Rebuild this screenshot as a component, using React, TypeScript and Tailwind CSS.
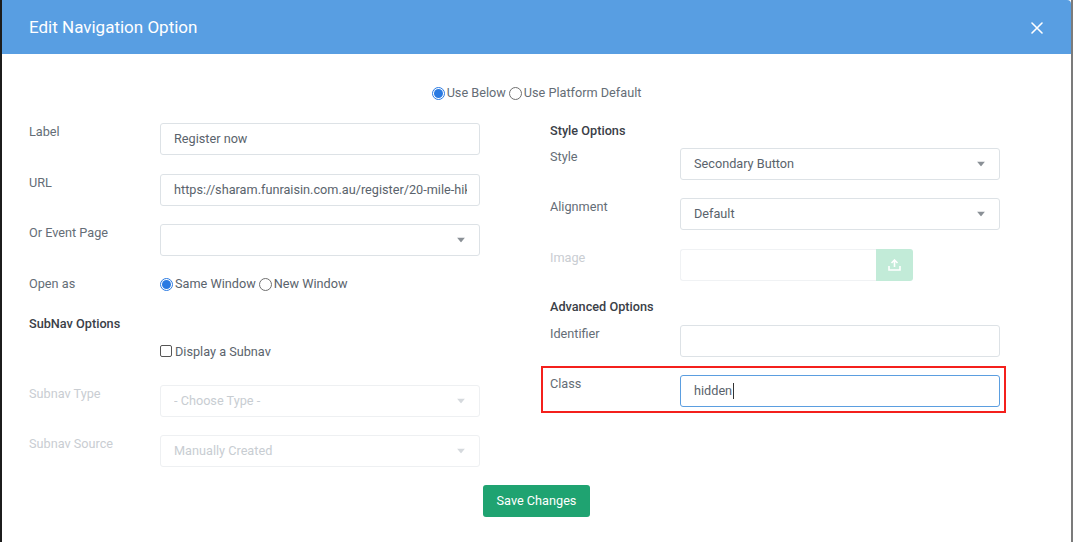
import React from "react";

const font = { fontFamily: "Roboto, 'Noto Sans', sans-serif" };

function Caret({ light }: { light?: boolean }) {
  return (
    <svg width="8" height="5" viewBox="0 0 8 5" className="absolute right-[14px] top-1/2 -translate-y-1/2">
      <path d="M0 0 L8 0 L4 5 Z" fill={light ? "#d5d9dd" : "#8a9096"} />
    </svg>
  );
}

function Radio({ checked }: { checked?: boolean }) {
  return checked ? (
    <span className="inline-flex w-[13px] h-[13px] rounded-full border border-[#2a7ae2] bg-white items-center justify-center mr-[2px]">
      <span className="w-[9px] h-[9px] rounded-full bg-[#2a7ae2]" />
    </span>
  ) : (
    <span className="inline-block w-[13px] h-[13px] rounded-full border border-[#6f6f6f] bg-white mr-[2px]" />
  );
}

function Row({
  label,
  children,
  disabled,
  className = "",
  labelW = "w-[130px]",
}: {
  label: string;
  children: React.ReactNode;
  disabled?: boolean;
  className?: string;
  labelW?: string;
}) {
  return (
    <div className={`flex items-start ${className}`}>
      <div className={`${labelW} leading-[18px] text-[12.7px] ${disabled ? "text-[#c9cdd2]" : "text-[#646d76]"}`}>{label}</div>
      {children}
    </div>
  );
}

function TextBox({ value, disabled, focus, select }: { value?: string; disabled?: boolean; focus?: boolean; select?: boolean }) {
  return (
    <div
      className={`relative w-[320px] h-[32px] rounded-[3px] border bg-white flex items-center pl-[13px] pr-[12px] whitespace-nowrap text-[12.7px] ${
        focus ? "border-[#5b9ee0]" : disabled ? "border-[#eef0f2]" : "border-[#dde2e6]"
      } ${disabled ? "text-[#c8cdd2]" : "text-[#5a636c]"}`}
    >
      <div className="flex-1 overflow-hidden flex items-center">
        <span>{value}</span>
        {focus && <span className="inline-block w-px h-[16px] bg-[#333] ml-px" />}
      </div>
      {select && <Caret light={disabled} />}
    </div>
  );
}

export default function App() {
  return (
    <div className="w-[1073px] h-[542px] flex overflow-hidden bg-white" style={font}>
      <div className="w-[2px] h-full bg-[#1c1c1c]" />
      <div className="flex-1 flex flex-col bg-white">
        <div className="h-[54px] bg-[#589ee2] rounded-tr-[4px] flex items-center justify-between pl-[27px] pr-[28px] pt-[1px]">
          <div className="text-white text-[17px] font-normal">Edit Navigation Option</div>
          <svg width="12" height="12" viewBox="0 0 12 12">
            <path d="M1 1 L11 11 M11 1 L1 11" stroke="white" strokeWidth="1.6" strokeLinecap="round" />
          </svg>
        </div>
        <div className="flex flex-col pt-[30px]">
          <div className="flex justify-center items-center h-[18px] text-[12.7px] text-[#646d76]">
            <Radio checked />
            <span className="mr-[3px]">Use Below</span>
            <Radio />
            <span>Use Platform Default</span>
          </div>
          <div className="flex pl-[27px] pt-[20px]">
            <div className="w-[451px] flex flex-col pt-[1px]">
              <Row label="Label" labelW="w-[131px]" className="mb-[19px]">
                <TextBox value="Register now" />
              </Row>
              <Row label="URL" labelW="w-[131px]" className="mb-[18px]">
                <TextBox value="https://sharam.funraisin.com.au/register/20-mile-hike" />
              </Row>
              <Row label="Or Event Page" labelW="w-[131px]" className="mb-[19px]">
                <TextBox select />
              </Row>
              <Row label="Open as" labelW="w-[131px]" className="mb-[22px]">
                <div className="flex items-center h-[18px] text-[12.7px] text-[#5a636c]">
                  <Radio checked />
                  <span className="mr-[3px]">Same Window</span>
                  <Radio />
                  <span>New Window</span>
                </div>
              </Row>
              <div className="h-[18px] leading-[18px] text-[12.7px] font-medium text-[#3a4047] mb-[10px]">SubNav Options</div>
              <div className="flex items-center h-[18px] pl-[131px] text-[12.7px] text-[#5a636c] mb-[24px]">
                <span className="inline-block w-[12px] h-[12px] rounded-[2px] border border-[#555] bg-white mr-[3px] -mt-[2px]" />
                <span>Display a Subnav</span>
              </div>
              <Row label="Subnav Type" labelW="w-[131px]" disabled className="mb-[18px]">
                <TextBox value="- Choose Type -" disabled select />
              </Row>
              <Row label="Subnav Source" labelW="w-[131px]" disabled>
                <TextBox value="Manually Created" disabled select />
              </Row>
            </div>
            <div className="w-[450px] ml-[70px] flex flex-col">
              <div className="h-[18px] leading-[18px] text-[12.7px] font-medium text-[#3a4047] mb-[8px]">Style Options</div>
              <Row label="Style" className="mb-[18px]">
                <TextBox value="Secondary Button" select />
              </Row>
              <Row label="Alignment" className="mb-[19px]">
                <TextBox value="Default" select />
              </Row>
              <Row label="Image" disabled className="mb-[17px]">
                <div className="flex h-[32px]">
                  <div className="w-[196px] h-full border border-[#f0f2f4] border-r-0 rounded-l-[3px] bg-white" />
                  <div className="w-[37px] h-full bg-[#c2ebd8] rounded-r-[3px] flex items-center justify-center">
                    <svg width="13" height="12" viewBox="0 0 13 12">
                      <path d="M6.5 1 L6.5 8 M3.5 4 L6.5 1 L9.5 4" stroke="white" strokeWidth="1.6" fill="none" />
                      <path d="M1 7 L1 11 L12 11 L12 7" stroke="white" strokeWidth="1.6" fill="none" />
                    </svg>
                  </div>
                </div>
              </Row>
              <div className="h-[18px] leading-[18px] text-[12.7px] font-medium text-[#3a4047] mb-[9px]">Advanced Options</div>
              <Row label="Identifier" className="mb-[9px]">
                <TextBox />
              </Row>
              <div className="-ml-[9px] w-[465px] border-2 border-[#f4201c] pt-[7px] pl-[7px] pr-[4px] pb-[4px]">
                <Row label="Class">
                  <TextBox value="hidden" focus />
                </Row>
              </div>
            </div>
          </div>
          <div className="flex justify-center mt-[18px]">
            <div className="w-[107px] h-[32px] rounded-[3px] bg-[#1fa371] text-white text-[12.7px] flex items-center justify-center">
              Save Changes
            </div>
          </div>
        </div>
      </div>
      <div className="w-[2px] h-full bg-[#7b7b7b]" />
    </div>
  );
}
